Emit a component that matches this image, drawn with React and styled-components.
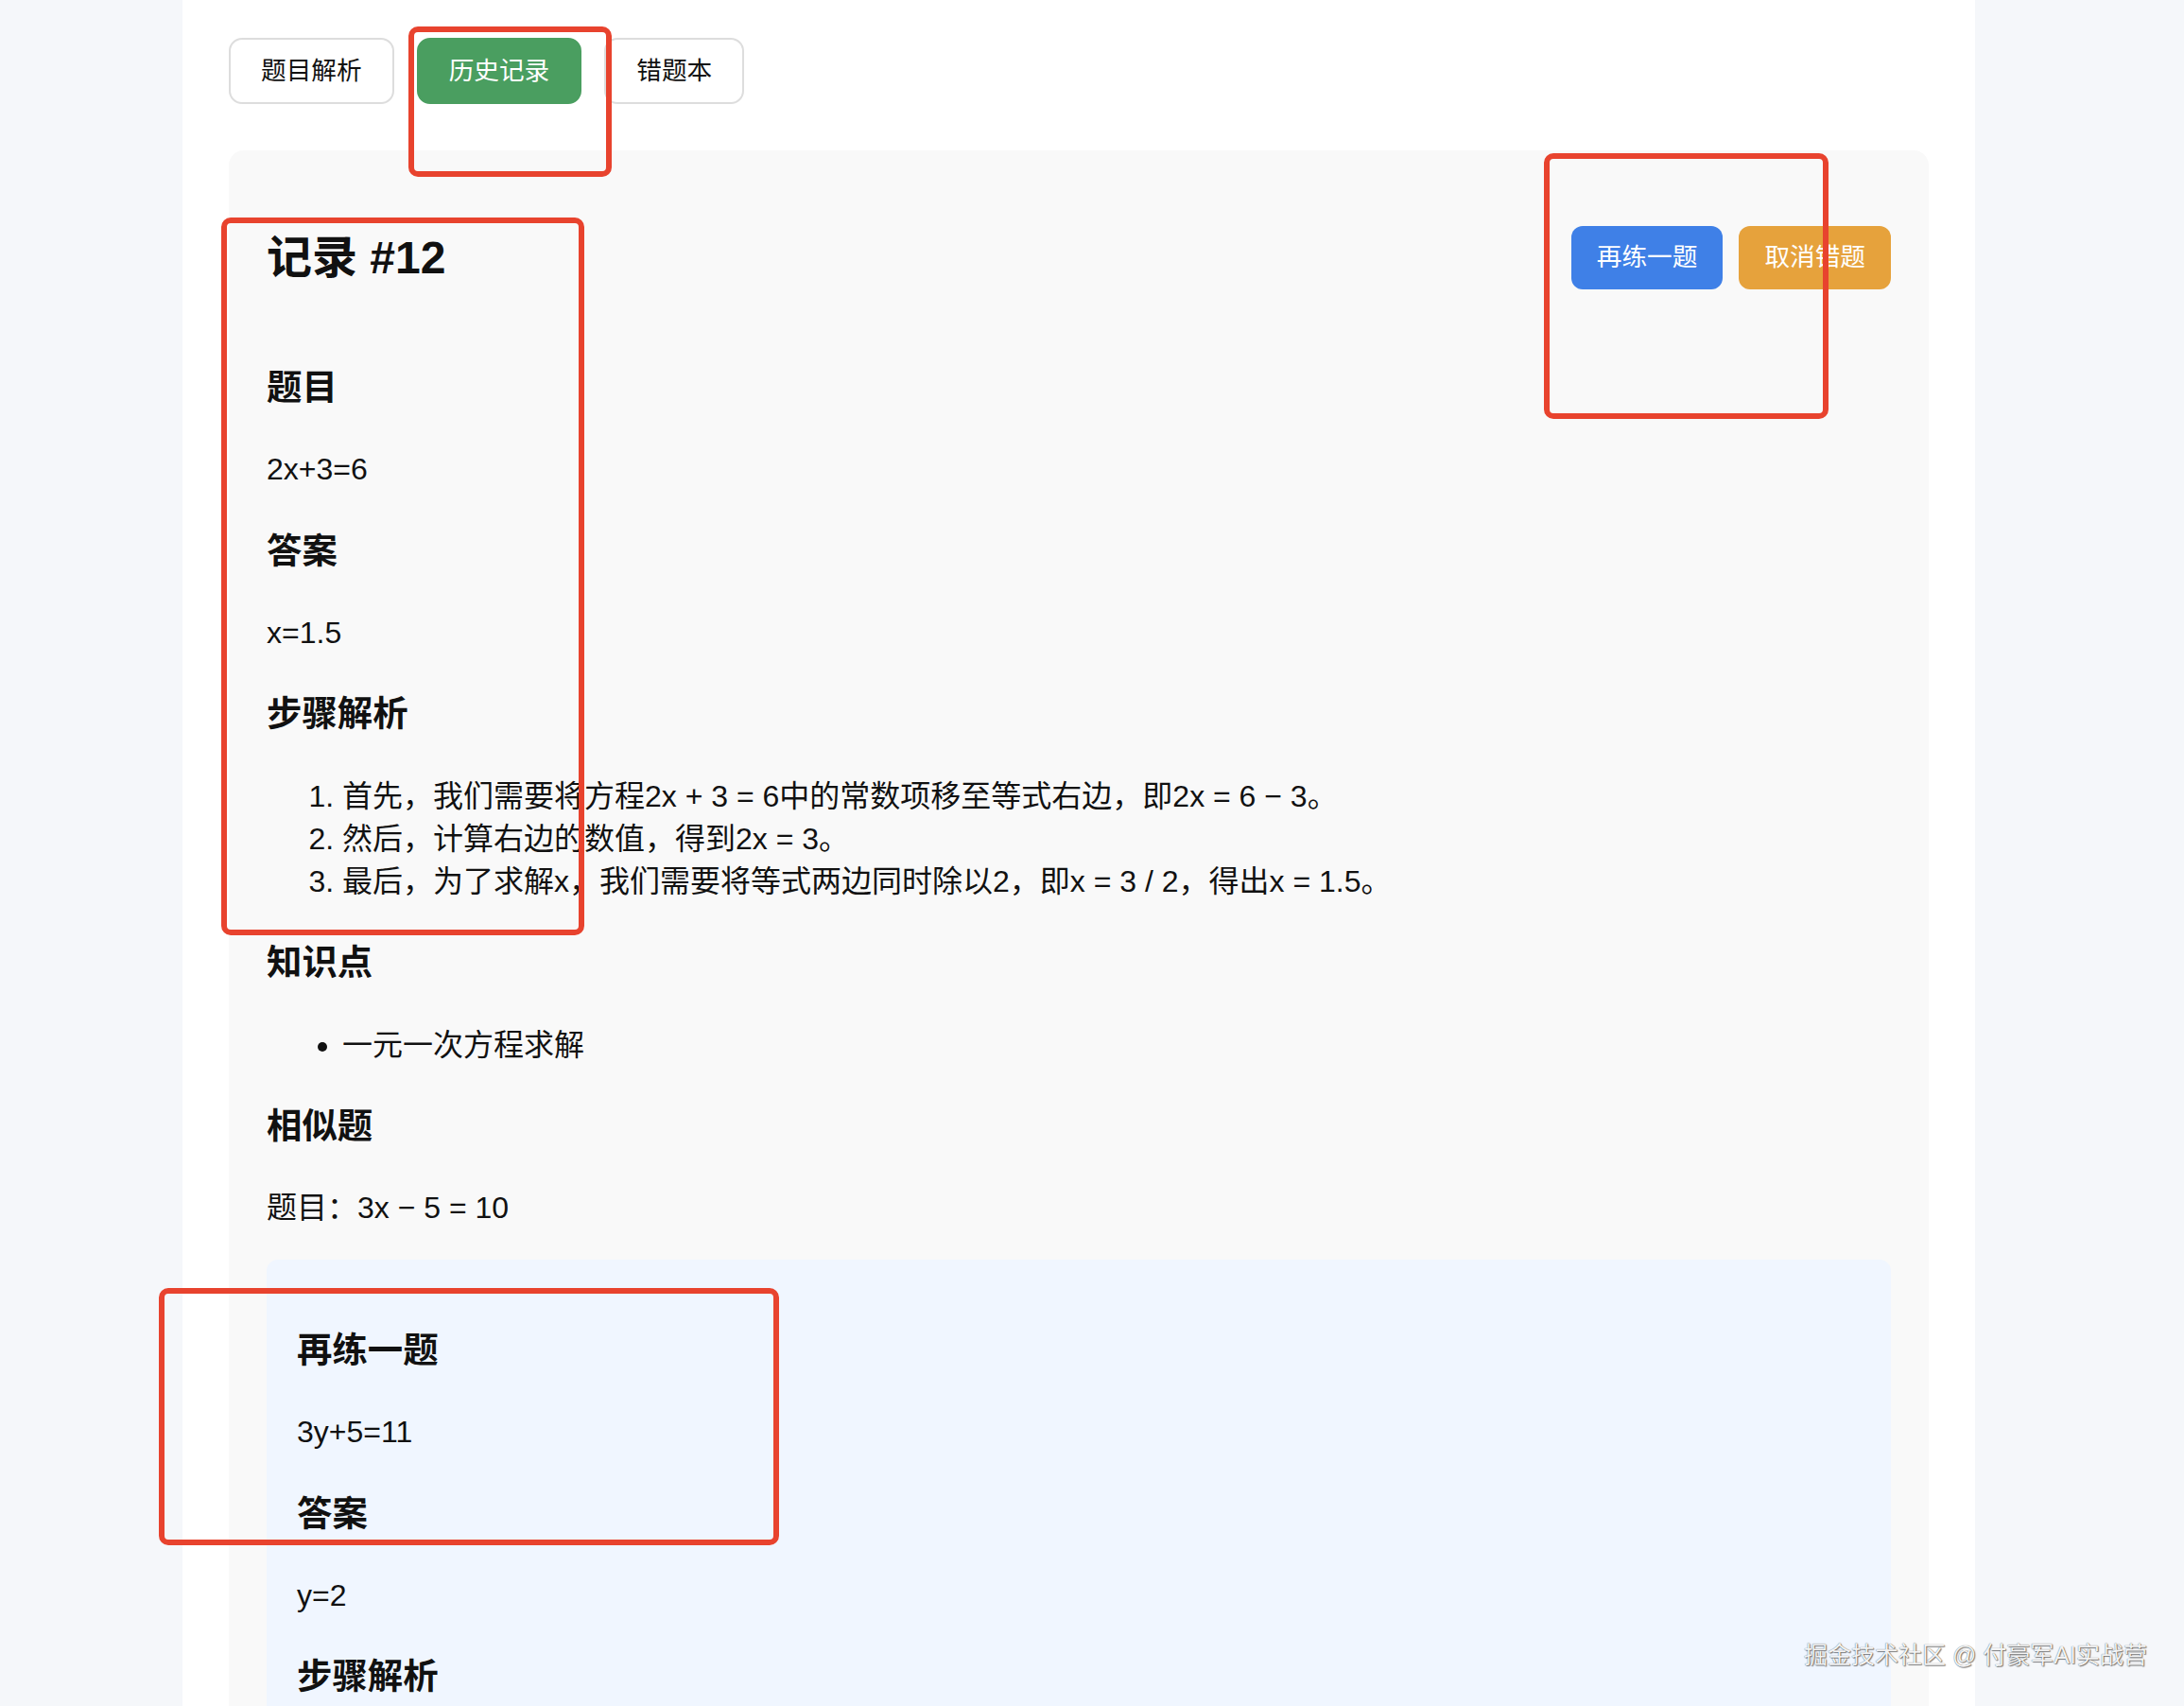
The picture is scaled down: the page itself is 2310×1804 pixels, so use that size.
import React from 'react';
import styled, { createGlobalStyle } from 'styled-components';

const GlobalStyle = createGlobalStyle`
  html, body {
    margin: 0;
    padding: 0;
  }
  body {
    background: #f5f7fa;
    font-family: "Liberation Sans", "Noto Sans CJK SC", sans-serif;
    color: #111;
  }
`;

const Page = styled.div`
  position: relative;
  padding: 0 221px 0 193px;
`;

const Container = styled.main`
  background: #fff;
  min-height: 1804px;
  padding: 40px 49px;
  box-sizing: border-box;
`;

const Tabs = styled.nav`
  display: flex;
  gap: 24px;
  margin-bottom: 49px;
`;

const Tab = styled.button`
  font-family: inherit;
  font-size: 26.67px;
  line-height: 38px;
  padding: 14px 32px;
  border-radius: 14px;
  border: 2px solid ${p => (p.$active ? '#4a9e60' : '#dddddd')};
  background: ${p => (p.$active ? '#4a9e60' : '#ffffff')};
  color: ${p => (p.$active ? '#ffffff' : '#111')};
  cursor: pointer;
`;

const Card = styled.section`
  background: #f9f9f9;
  border-radius: 16px;
  padding: 40px;
`;

const Header = styled.div`
  display: flex;
  justify-content: space-between;
  align-items: center;
`;

const Title = styled.h2`
  font-size: 48px;
  line-height: 1.41;
  margin: 39.84px 0;
  font-weight: 700;
  color: #111;
`;

const Actions = styled.div`
  display: flex;
  gap: 17px;
`;

const ActionButton = styled.button`
  font-family: inherit;
  font-size: 26.67px;
  line-height: 37px;
  padding: 15px 27px;
  border: none;
  border-radius: 12px;
  color: #fff;
  background: ${p => (p.$tone === 'warn' ? '#e6a23c' : '#3f80e7')};
  cursor: pointer;
`;

const Heading = styled.h3`
  font-size: 37.44px;
  line-height: 1.41;
  margin: 37.44px 0;
  font-weight: 700;
  color: #111;
`;

const Text = styled.p`
  font-size: 32px;
  line-height: 1.41;
  margin: 32px 0;
`;

const Steps = styled.ol`
  font-size: 32px;
  line-height: 1.41;
  margin: 32px 0;
  padding-left: 80px;
`;

const Points = styled.ul`
  font-size: 32px;
  line-height: 1.41;
  margin: 32px 0;
  padding-left: 80px;
`;

const Practice = styled.div`
  background: #f0f6ff;
  border-radius: 12px;
  padding: 32px;
  margin: 32px 0;
`;

/* red highlight frames drawn over the page */
const Frame = styled.div`
  position: absolute;
  border: 6px solid #e8432e;
  border-radius: 10px;
  box-sizing: border-box;
  pointer-events: none;
`;

const Watermark = styled.div`
  position: absolute;
  left: 1908px;
  top: 1730px;
  font-size: 25px;
  white-space: nowrap;
  color: rgba(255, 255, 255, 0.95);
  text-shadow: 0 0 1px rgba(0, 0, 0, 0.7), 1px 1px 1px rgba(0, 0, 0, 0.45);
`;

const record = {
  id: 12,
  question: '2x+3=6',
  answer: 'x=1.5',
  steps: [
    '首先，我们需要将方程2x + 3 = 6中的常数项移至等式右边，即2x = 6 − 3。',
    '然后，计算右边的数值，得到2x = 3。',
    '最后，为了求解x，我们需要将等式两边同时除以2，即x = 3 / 2，得出x = 1.5。',
  ],
  points: ['一元一次方程求解'],
  similar: '题目：3x − 5 = 10',
};

const practice = {
  question: '3y+5=11',
  answer: 'y=2',
  steps: [
    '首先，将方程3y + 5 = 11中的常数项移至等式右边，即3y = 11 − 5。',
    '然后，计算右边的数值，得到3y = 6。',
    '最后，将等式两边同时除以3，得出y = 2。',
  ],
};

const frames = [
  { left: 432, top: 28, width: 215, height: 159 },
  { left: 234, top: 230, width: 384, height: 759 },
  { left: 1633, top: 162, width: 301, height: 281 },
  { left: 168, top: 1362, width: 656, height: 272 },
];

export default function App() {
  return (
    <Page>
      <GlobalStyle />
      <Container>
        <Tabs>
          <Tab>题目解析</Tab>
          <Tab $active>历史记录</Tab>
          <Tab>错题本</Tab>
        </Tabs>

        <Card>
          <Header>
            <Title>记录 #{record.id}</Title>
            <Actions>
              <ActionButton>再练一题</ActionButton>
              <ActionButton $tone="warn">取消错题</ActionButton>
            </Actions>
          </Header>

          <Heading>题目</Heading>
          <Text>{record.question}</Text>
          <Heading>答案</Heading>
          <Text>{record.answer}</Text>
          <Heading>步骤解析</Heading>
          <Steps>
            {record.steps.map(s => (
              <li key={s}>{s}</li>
            ))}
          </Steps>
          <Heading>知识点</Heading>
          <Points>
            {record.points.map(p => (
              <li key={p}>{p}</li>
            ))}
          </Points>
          <Heading>相似题</Heading>
          <Text>{record.similar}</Text>

          <Practice>
            <Heading>再练一题</Heading>
            <Text>{practice.question}</Text>
            <Heading>答案</Heading>
            <Text>{practice.answer}</Text>
            <Heading>步骤解析</Heading>
            <Steps>
              {practice.steps.map(s => (
                <li key={s}>{s}</li>
              ))}
            </Steps>
          </Practice>
        </Card>
      </Container>

      {frames.map((f, i) => (
        <Frame
          key={i}
          style={{ left: f.left, top: f.top, width: f.width, height: f.height }}
        />
      ))}
      <Watermark>掘金技术社区 @ 付豪军AI实战营</Watermark>
    </Page>
  );
}
